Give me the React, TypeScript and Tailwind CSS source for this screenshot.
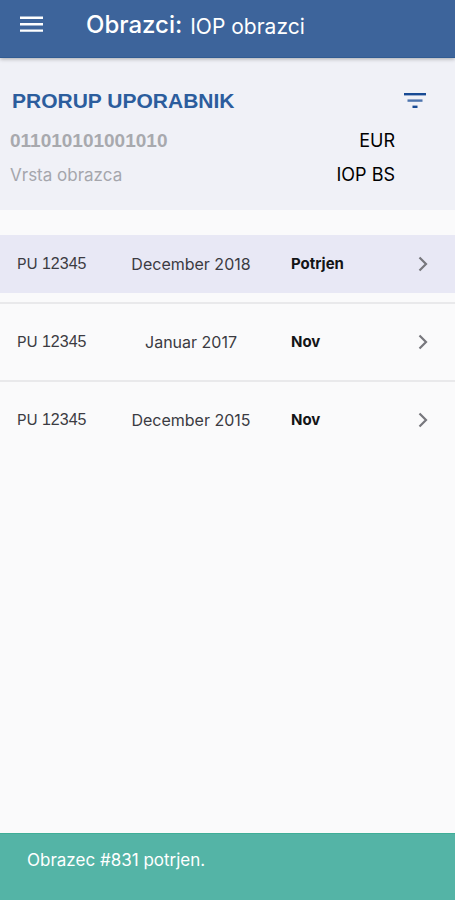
import { clsx } from "clsx";

type Form = {
  id: number;
  period: string;
  status: string;
  highlighted?: boolean;
};

const forms: Form[] = [
  { id: 1, period: "December 2018", status: "Potrjen", highlighted: true },
  { id: 2, period: "Januar 2017", status: "Nov" },
  { id: 3, period: "December 2015", status: "Nov" },
];

function AppBar() {
  return (
    <header className="relative flex h-[58px] items-center border-b border-[#315b92] bg-[#3d649b] px-5 pb-[7px] text-white shadow-[0_1px_4px_rgba(0,0,0,0.3)]">
      <button type="button" aria-label="Meni" className="mr-[42px]">
        <svg viewBox="0 0 24 18" className="h-[18px] w-6" fill="currentColor">
          <path d="M0 .6h23V3H0zM0 7h23v2.4H0zM0 13.4h23v2.4H0z" />
        </svg>
      </button>
      <h1 className="flex items-end gap-2">
        <span className="text-2xl font-medium">Obrazci:</span>
        <span className="text-[21px] leading-7">IOP obrazci</span>
      </h1>
    </header>
  );
}

function AccountPanel() {
  return (
    <section className="bg-[#f0f1f7] pt-[26px] pr-[27px] pb-[18px] pl-[10px]">
      <div className="flex h-[34px] items-center justify-between">
        <h2 className="pl-[2px] font-['Liberation_Sans',sans-serif] text-[21px] font-bold text-[#2c5d9d]">
          PRORUP UPORABNIK
        </h2>
        <button type="button" aria-label="Filter" className="text-[#174a94]">
          <svg viewBox="0 0 24 16" className="h-4 w-6" fill="currentColor">
            <path d="M0 0h22v2.4H0z" />
            <path d="M3.5 6.4h15v2.4h-15z" opacity="0.75" />
            <path d="M8.5 12.6h5V15h-5z" />
          </svg>
        </button>
      </div>
      <dl className="pt-[6px] pr-[33px] text-lg">
        <div className="flex h-[34px] items-center justify-between">
          <dt className="font-['Liberation_Sans',sans-serif] text-[19px] font-bold text-[#a8a9ae]">011010101001010</dt>
          <dd className="text-black">EUR</dd>
        </div>
        <div className="flex h-[34px] items-center justify-between">
          <dt className="text-[17px] text-[#a5a6ac]">Vrsta obrazca</dt>
          <dd className="text-black">IOP BS</dd>
        </div>
      </dl>
    </section>
  );
}

function FormRow({ form }: { form: Form }) {
  return (
    <li className="border-b-2 border-[#e9e9eb] py-[9px] last:border-transparent">
      <button
        type="button"
        className={clsx(
          "grid h-[58px] w-full grid-cols-[98px_152px_1fr_auto] items-center pr-[27px] pl-[17px] text-base text-[#3b3b42]",
          form.highlighted && "bg-[#e8e8f5]",
        )}
      >
        <span className="text-left text-[15px]">
          PU <span className="font-['Liberation_Sans',sans-serif] text-base">12345</span>
        </span>
        <span className="text-center">{form.period}</span>
        <span className="pl-6 text-left text-[15px] font-bold text-[#141416]">{form.status}</span>
        <svg viewBox="0 0 10 16" className="h-4 w-[10px] text-[#77777d]" fill="none" stroke="currentColor" strokeWidth="2.2">
          <path d="M1.5 1.5 8 8l-6.5 6.5" />
        </svg>
      </button>
    </li>
  );
}

export default function App() {
  return (
    <div className="flex min-h-screen flex-col bg-[#fafafb] font-['Inter',sans-serif]">
      <AppBar />
      <AccountPanel />
      <main className="flex-1 pt-4">
        <ul>
          {forms.map((form) => (
            <FormRow key={form.id} form={form} />
          ))}
        </ul>
      </main>
      <div role="status" className="border-t border-[#3fae97] bg-[#54b4a6] px-[27px] pt-[14px] pb-7 text-[17px] leading-6 text-white">
        Obrazec #831 potrjen.
      </div>
    </div>
  );
}
